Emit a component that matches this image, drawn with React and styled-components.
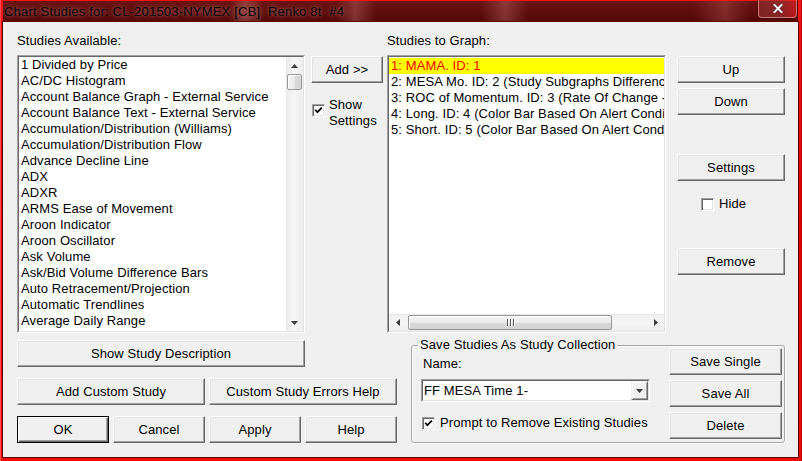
import React from 'react';
import styled, { createGlobalStyle } from 'styled-components';

const Global = createGlobalStyle`
  html, body { margin: 0; padding: 0; width: 802px; height: 461px; overflow: hidden; background: #d00000; }
  * { box-sizing: border-box; }
  #root { width: 802px; height: 461px; }
`;

const Window = styled.div`
  width: 802px;
  height: 461px;
  display: flex;
  flex-direction: column;
  padding: 1px 4px 4px 3px;
  background: linear-gradient(180deg, #f31414 0%, #e60000 50%, #f00a0a 100%);
  box-shadow: inset 1px 0 0 #ff4a4a, inset -1px 0 0 #b00000;
  font-family: "Liberation Sans", Arial, sans-serif;
  font-size: 13px;
  letter-spacing: 0.1px;
  color: #000;
`;

const TitleBar = styled.div`
  height: 21px;
  flex: none;
  display: flex;
  align-items: flex-start;
  background:
    linear-gradient(90deg, transparent 0, transparent 226px, rgba(255,170,170,.28) 242px, transparent 262px,
      transparent 334px, rgba(255,170,170,.25) 352px, transparent 374px,
      transparent 478px, rgba(255,170,170,.25) 502px, transparent 526px,
      transparent 690px, rgba(255,150,150,.22) 722px, transparent 748px),
    linear-gradient(180deg, #6c1212 0%, #5c0b0b 55%, #520707 100%);
`;

const TitleText = styled.div`
  padding: 3px 0 0 1px;
  line-height: 16px;
  font-size: 13px;
  letter-spacing: 0.2px;
  white-space: pre;
  color: #000;
  text-shadow: 0 0 7px rgba(185, 120, 120, 0.85), 0 0 3px rgba(185, 120, 120, 0.6);
`;

const CloseBtn = styled.div`
  margin-left: auto;
  margin-right: 1px;
  margin-top: -1px;
  width: 39px;
  height: 18px;
  display: flex;
  align-items: center;
  justify-content: center;
  border: 1px solid rgba(255, 200, 200, 0.55);
  border-top: none;
  border-radius: 0 0 4px 4px;
  box-shadow: 0 0 0 1px rgba(60, 0, 0, 0.55);
  background: linear-gradient(90deg, rgba(150,50,50,.6), rgba(170,60,60,.55) 60%, rgba(230,30,30,.7));
`;

const Client = styled.div`
  flex: 1;
  background: #f0f0f0;
  display: flex;
  flex-direction: column;
  padding: 11px 0 0 14px;
  box-shadow: 0 0 0 1px #5c0404;
`;

const TopArea = styled.div`
  display: flex;
  align-items: flex-start;
`;

const Column = styled.div`
  display: flex;
  flex-direction: column;
  flex: none;
  width: ${p => p.$w}px;
  margin-left: ${p => p.$ml || 0}px;
  padding-top: ${p => p.$pt || 0}px;
`;

const Label = styled.div`
  height: 22px;
  line-height: 16px;
  white-space: nowrap;
`;

const ListFrame = styled.div`
  height: ${p => p.$h}px;
  border: 1px solid;
  border-color: #a0a0a0 #ffffff #ffffff #a0a0a0;
`;

const ListInner = styled.div`
  height: 100%;
  border: 1px solid;
  border-color: #696969 #e3e3e3 #e3e3e3 #696969;
  background: #fff;
  display: flex;
  flex-direction: ${p => p.$dir || 'row'};
  overflow: hidden;
`;

const Items = styled.div`
  flex: 1;
  min-width: 0;
  min-height: 0;
  overflow: hidden;
  padding-top: ${p => p.$pt || 0}px;
`;

const Item = styled.div`
  height: 16px;
  line-height: 16px;
  padding-left: 2px;
  white-space: nowrap;
  overflow: hidden;
  background: ${p => (p.$sel ? '#ffff00' : 'transparent')};
  color: ${p => (p.$sel ? '#ff0000' : '#000')};
`;

const VScroll = styled.div`
  width: 17px;
  flex: none;
  display: flex;
  flex-direction: column;
  background: linear-gradient(90deg, #dedede 0, #efefef 1px, #f6f6f6 50%, #ededed 100%);
`;

const HScroll = styled.div`
  height: 17px;
  flex: none;
  display: flex;
  align-items: center;
  background: linear-gradient(180deg, #dedede 0, #efefef 1px, #f6f6f6 50%, #ededed 100%);
`;

const ArrowBox = styled.div`
  width: 17px;
  height: 17px;
  flex: none;
  display: flex;
  align-items: center;
  justify-content: center;
`;

const Fill = styled.div`
  flex: 1;
`;

const VThumb = styled.div`
  flex: none;
  height: 16px;
  margin: 0 1px 0 1px;
  border: 1px solid #979797;
  border-radius: 2px;
  background: linear-gradient(90deg, #f6f6f6, #e9e9e9 50%, #dadada 51%, #d3d3d3);
  box-shadow: inset 1px 1px 0 #fff;
`;

const HThumb = styled.div`
  flex: none;
  width: 204px;
  height: 15px;
  margin-left: 2px;
  border: 1px solid #979797;
  border-radius: 2px;
  display: flex;
  align-items: center;
  justify-content: center;
  background: linear-gradient(180deg, #f6f6f6, #e9e9e9 50%, #dadada 51%, #d3d3d3);
  box-shadow: inset 1px 1px 0 #fff;
`;

const Button = styled.button`
  display: flex;
  align-items: center;
  justify-content: center;
  width: ${p => (p.$w ? `${p.$w}px` : '100%')};
  height: 27px;
  margin: 0;
  margin-top: ${p => p.$mt || 0}px;
  padding: 0;
  font-family: "Liberation Sans", Arial, sans-serif;
  font-size: 13px;
  letter-spacing: 0.1px;
  color: #000;
  background: #f0f0f0;
  border: 1px solid;
  border-color: ${p => (p.$def ? '#000 #000 #000 #000' : '#ffffff #696969 #696969 #ffffff')};
  box-shadow: ${p =>
    p.$def
      ? 'inset 1px 1px 0 #fff, inset -1px -1px 0 #696969, inset -2px -2px 0 #a0a0a0'
      : 'inset -1px -1px 0 #a0a0a0, inset 1px 1px 0 #e3e3e3'};
  white-space: nowrap;
`;

const CheckRow = styled.div`
  display: flex;
  align-items: flex-start;
  margin-top: ${p => p.$mt || 0}px;
  margin-left: ${p => p.$ml || 0}px;
`;

const Box = styled.span`
  flex: none;
  width: 13px;
  height: 13px;
  margin-top: ${p => p.$mt || 0}px;
  border: 1px solid;
  border-color: #a0a0a0 #ffffff #ffffff #a0a0a0;
  background: #fff;
  box-shadow: inset 1px 1px 0 #696969, inset -1px -1px 0 #e3e3e3;
  display: flex;
  align-items: center;
  justify-content: center;
`;

const CheckText = styled.div`
  margin-left: ${p => p.$ml || 5}px;
  line-height: 16px;
  white-space: nowrap;
`;

const BottomArea = styled.div`
  display: flex;
  align-items: flex-start;
  margin-top: 7px;
`;

const BottomLeft = styled.div`
  width: 380px;
  flex: none;
  display: flex;
  flex-direction: column;
`;

const ButtonGrid = styled.div`
  display: grid;
  grid-template-columns: repeat(${p => p.$cols}, 1fr);
  column-gap: 4px;
  margin-top: 11px;
`;

const GroupBox = styled.div`
  position: relative;
  flex: none;
  width: 374px;
  height: 98px;
  margin-left: 14px;
  margin-top: 5px;
  border: 1px solid #a6a6a6;
  border-radius: 3px;
  box-shadow: inset 1px 1px 0 #fff, 1px 1px 0 #fff;
  display: flex;
  justify-content: space-between;
`;

const GroupTitle = styled.div`
  position: absolute;
  top: -9px;
  left: 6px;
  padding: 0 2px;
  line-height: 16px;
  background: #f0f0f0;
  white-space: nowrap;
`;

const GroupLeft = styled.div`
  display: flex;
  flex-direction: column;
  padding: 10px 0 0 9px;
`;

const GroupRight = styled.div`
  display: flex;
  flex-direction: column;
  gap: 5px;
  padding: 2px 2px 0 0;
`;

const TextLine = styled.div`
  line-height: 16px;
  padding-left: 2px;
`;

const Combo = styled.div`
  margin-top: 7px;
  width: 229px;
  height: 23px;
  border: 1px solid;
  border-color: #a0a0a0 #ffffff #ffffff #a0a0a0;
`;

const ComboInner = styled.div`
  height: 100%;
  border: 1px solid;
  border-color: #696969 #e3e3e3 #e3e3e3 #696969;
  background: #fff;
  display: flex;
  align-items: center;
  justify-content: space-between;
  padding-left: 1px;
`;

const ComboBtn = styled.div`
  width: 17px;
  height: 19px;
  border: 1px solid;
  border-color: #f0f0f0 #696969 #696969 #f0f0f0;
  box-shadow: inset 1px 1px 0 #fff, inset -1px -1px 0 #a0a0a0;
  background: #f0f0f0;
  display: flex;
  align-items: center;
  justify-content: center;
`;

const Tri = ({ dir }) => {
  const paths = {
    up: 'M3.5 0 L7 4 L0 4 Z',
    down: 'M0 0 L7 0 L3.5 4 Z',
    left: 'M4 0 L4 7 L0 3.5 Z',
    right: 'M0 0 L4 3.5 L0 7 Z',
  };
  const vert = dir === 'up' || dir === 'down';
  return (
    <svg width={vert ? 7 : 4} height={vert ? 4 : 7} viewBox={vert ? '0 0 7 4' : '0 0 4 7'}>
      <path d={paths[dir]} fill="#3c3c3c" />
    </svg>
  );
};

const Check = ({ checked }) =>
  checked ? (
    <svg width="9" height="9" viewBox="0 0 9 9">
      <polyline points="1.2,3.8 3.4,6.2 7.8,1.6" fill="none" stroke="#000" strokeWidth="1.7" />
    </svg>
  ) : null;

const CheckBox = ({ checked, mt }) => (
  <Box $mt={mt}>
    <Check checked={checked} />
  </Box>
);

const leftItems = [
  '1 Divided by Price',
  'AC/DC Histogram',
  'Account Balance Graph - External Service',
  'Account Balance Text - External Service',
  'Accumulation/Distribution (Williams)',
  'Accumulation/Distribution Flow',
  'Advance Decline Line',
  'ADX',
  'ADXR',
  'ARMS Ease of Movement',
  'Aroon Indicator',
  'Aroon Oscillator',
  'Ask Volume',
  'Ask/Bid Volume Difference Bars',
  'Auto Retracement/Projection',
  'Automatic Trendlines',
  'Average Daily Range',
  'Average True Range',
];

const rightItems = [
  '1: MAMA. ID: 1',
  '2: MESA Mo. ID: 2 (Study Subgraphs Difference)',
  '3: ROC of Momentum. ID: 3 (Rate Of Change - Percentage)',
  '4: Long. ID: 4 (Color Bar Based On Alert Condition)',
  '5: Short. ID: 5 (Color Bar Based On Alert Condition)',
];

export default function App() {
  return (
    <>
      <Global />
      <Window>
        <TitleBar>
          <TitleText>{'Chart Studies for: CL-201503-NYMEX [CB]  Renko 8t  #4'}</TitleText>
          <CloseBtn>
            <svg width="10" height="9" viewBox="0 0 10 9">
              <path d="M1.5 1 L8.5 8 M8.5 1 L1.5 8" stroke="#3a0000" strokeWidth="3.2" strokeLinecap="square" opacity="0.6" />
              <path d="M1.5 1 L8.5 8 M8.5 1 L1.5 8" stroke="#fff" strokeWidth="2" strokeLinecap="square" />
            </svg>
          </CloseBtn>
        </TitleBar>
        <Client>
          <TopArea>
            <Column $w={288}>
              <Label>Studies Available:</Label>
              <ListFrame $h={278}>
                <ListInner>
                  <Items>
                    {leftItems.map(t => (
                      <Item key={t}>{t}</Item>
                    ))}
                  </Items>
                  <VScroll>
                    <ArrowBox><Tri dir="up" /></ArrowBox>
                    <VThumb />
                    <Fill />
                    <ArrowBox><Tri dir="down" /></ArrowBox>
                  </VScroll>
                </ListInner>
              </ListFrame>
            </Column>

            <Column $w={72} $ml={6} $pt={23}>
              <Button>Add &gt;&gt;</Button>
              <CheckRow $mt={14} $ml={1}>
                <CheckBox checked mt={7} />
                <CheckText $ml={4}>Show<br />Settings</CheckText>
              </CheckRow>
            </Column>

            <Column $w={279} $ml={4}>
              <Label>Studies to Graph:</Label>
              <ListFrame $h={278}>
                <ListInner $dir="column">
                  <Items $pt={1}>
                    {rightItems.map((t, i) => (
                      <Item key={t} $sel={i === 0}>{t}</Item>
                    ))}
                  </Items>
                  <HScroll>
                    <ArrowBox><Tri dir="left" /></ArrowBox>
                    <HThumb>
                      <svg width="9" height="7" viewBox="0 0 9 7">
                        <rect x="1" y="0" width="1" height="7" fill="#5a5a5a" />
                        <rect x="2" y="0" width="1" height="7" fill="#fff" />
                        <rect x="4" y="0" width="1" height="7" fill="#5a5a5a" />
                        <rect x="5" y="0" width="1" height="7" fill="#fff" />
                        <rect x="7" y="0" width="1" height="7" fill="#5a5a5a" />
                        <rect x="8" y="0" width="1" height="7" fill="#fff" />
                      </svg>
                    </HThumb>
                    <Fill />
                    <ArrowBox><Tri dir="right" /></ArrowBox>
                  </HScroll>
                </ListInner>
              </ListFrame>
            </Column>

            <Column $w={108} $ml={11} $pt={23}>
              <Button>Up</Button>
              <Button $mt={5}>Down</Button>
              <Button $mt={39}>Settings</Button>
              <CheckRow $mt={15} $ml={24}>
                <CheckBox mt={2} />
                <CheckText $ml={5}>Hide</CheckText>
              </CheckRow>
              <Button $mt={36}>Remove</Button>
            </Column>
          </TopArea>

          <BottomArea>
            <BottomLeft>
              <Button $w={288}>Show Study Description</Button>
              <ButtonGrid $cols={2}>
                <Button>Add Custom Study</Button>
                <Button>Custom Study Errors Help</Button>
              </ButtonGrid>
              <ButtonGrid $cols={4}>
                <Button $def>OK</Button>
                <Button>Cancel</Button>
                <Button>Apply</Button>
                <Button>Help</Button>
              </ButtonGrid>
            </BottomLeft>

            <GroupBox>
              <GroupTitle>Save Studies As Study Collection</GroupTitle>
              <GroupLeft>
                <TextLine>Name:</TextLine>
                <Combo>
                  <ComboInner>
                    <span>FF MESA Time 1-</span>
                    <ComboBtn><Tri dir="down" /></ComboBtn>
                  </ComboInner>
                </Combo>
                <CheckRow $mt={13} $ml={1}>
                  <CheckBox checked mt={2} />
                  <CheckText $ml={5}>Prompt to Remove Existing Studies</CheckText>
                </CheckRow>
              </GroupLeft>
              <GroupRight>
                <Button $w={113}>Save Single</Button>
                <Button $w={113}>Save All</Button>
                <Button $w={113}>Delete</Button>
              </GroupRight>
            </GroupBox>
          </BottomArea>
        </Client>
      </Window>
    </>
  );
}
